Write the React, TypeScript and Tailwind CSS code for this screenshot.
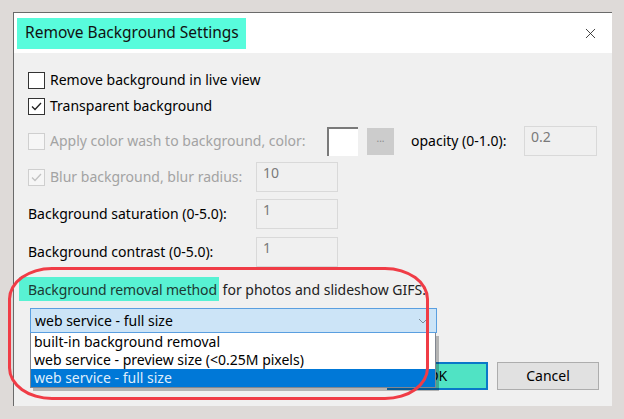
import { X } from "lucide-react";

const font = { fontFamily: '"Noto Sans", "Open Sans", sans-serif' };

function Box({ checked, disabled }: { checked?: boolean; disabled?: boolean }) {
  return (
    <div
      className={
        "flex h-[17px] w-[17px] shrink-0 items-center justify-center border " +
        (disabled ? "border-[#cfcfcf] bg-[#f6f6f6]" : "border-[#333] bg-white")
      }
    >
      {checked ? (
        <svg width="13" height="13" viewBox="0 0 13 13">
          <path d="M2 6.5 L5 9.5 L11 3" fill="none" stroke={disabled ? "#c2c2c2" : "#222"} strokeWidth="1.3" />
        </svg>
      ) : null}
    </div>
  );
}

function Field({ value, className }: { value: string; className?: string }) {
  return (
    <div
      className={
        "flex h-[30px] items-start border border-[#d9d9d9] bg-[#f0f0f0] px-[6px] pt-[3px] text-[#7a7a7a] " +
        (className ?? "")
      }
    >
      {value}
    </div>
  );
}

export default function App() {
  return (
    <div className="relative h-[419px] w-[624px] overflow-hidden bg-[#dedad8] pl-[13px] pt-[12px]" style={font}>
      <div className="flex h-[394px] w-[599px] flex-col border-l border-t border-[#6a6a6a] bg-[#f0f0f0] text-[14px] leading-none text-black">
        {/* title bar */}
        <div className="flex h-[40px] shrink-0 items-center justify-between bg-white pl-[3px] pr-[13px]">
          <div className="flex h-[31px] w-[229px] items-center bg-[#58fcdc] pl-[8px] text-[15.5px] text-[#111]">
            Remove Background Settings
          </div>
          <X size={17} strokeWidth={1.2} className="text-[#222]" />
        </div>

        {/* body */}
        <div className="relative flex flex-col pl-[14px] pt-[18px]">
          <div className="flex h-[18px] items-center gap-[5px]">
            <Box />
            <span>Remove background in live view</span>
          </div>
          <div className="mt-[8px] flex h-[18px] items-center gap-[5px]">
            <Box checked />
            <span>Transparent background</span>
          </div>
          <div className="mt-[10px] flex h-[32px] items-center">
            <Box disabled />
            <span className="ml-[5px] w-[277px] whitespace-nowrap text-[#a3a3a3]">Apply color wash to background, color:</span>
            <div className="h-[29px] w-[31px] border-l-2 border-t-2 border-[#7a7a7a] bg-white" />
            <div className="ml-[9px] flex h-[27px] w-[27px] items-center justify-center bg-[#cccccc] pb-[6px] text-[10px] text-[#8a8a8a]">
              ...
            </div>
            <span className="ml-[17px] w-[113px] whitespace-nowrap">opacity (0-1.0):</span>
            <Field value="0.2" className="w-[73px]" />
          </div>
          <div className="mt-[5px] flex h-[30px] items-center">
            <Box checked disabled />
            <span className="ml-[5px] w-[206px] text-[#a3a3a3]">Blur background, blur radius:</span>
            <Field value="10" className="w-[82px]" />
          </div>
          <div className="mt-[7px] flex h-[30px] items-center">
            <span className="w-[228px]">Background saturation (0-5.0):</span>
            <Field value="1" className="w-[82px]" />
          </div>
          <div className="mt-[8px] flex h-[30px] items-center">
            <span className="w-[228px]">Background contrast (0-5.0):</span>
            <Field value="1" className="w-[82px]" />
          </div>
          <div className="mt-[10px] flex h-[24px] items-center whitespace-nowrap">
            <span className="-ml-[9px] flex h-[24px] shrink-0 items-center bg-[#58f2d3] pl-[9px] pr-[2px] pt-[2px] tracking-[-0.12px] text-[#1c3a34]">
              Background removal method
            </span>
            <span className="pt-[2px] text-[#222]">&nbsp;for photos and slideshow GIFS:</span>
          </div>

          {/* select */}
          <div className="relative ml-[2px] mt-[7px] w-[407px]">
            <div className="flex h-[25px] items-center justify-between border border-[#5a9fe0] bg-[#cce4f7] pl-[4px] pr-[8px]">
              <span>web service - full size</span>
              <svg width="10" height="6" viewBox="0 0 10 6">
                <path d="M1 1 L5 5 L9 1" fill="none" stroke="#7a8a99" strokeWidth="1" />
              </svg>
            </div>
            <div className="absolute left-0 top-[25px] z-10 w-[406px] border border-t-0 border-[#828790] bg-white shadow-[3px_3px_0_rgba(0,0,0,0.25)]">
              <div className="flex h-[18px] items-center pl-[3px]">built-in background removal</div>
              <div className="flex h-[18px] items-center pl-[3px]">web service - preview size (&lt;0.25M pixels)</div>
              <div className="flex h-[18px] items-center bg-[#0078d7] pl-[3px] text-[#dfeefc]">web service - full size</div>
            </div>
          </div>

          {/* buttons */}
          <div className="mt-[29px] flex gap-[9px] pl-[359px]">
            <div className="flex h-[28px] w-[101px] items-center justify-center border-2 border-[#0a78c8] bg-[#50e3c4]">
              OK
            </div>
            <div className="flex h-[28px] w-[102px] items-center justify-center border border-[#adadad] bg-[#e1e1e1]">
              Cancel
            </div>
          </div>
        </div>
      </div>

      {/* red annotation */}
      <div className="pointer-events-none absolute left-[8px] top-[267px] z-20 h-[133px] w-[421px] rounded-[44px/32px] border-[3px] border-[#f03c46]" />
    </div>
  );
}
